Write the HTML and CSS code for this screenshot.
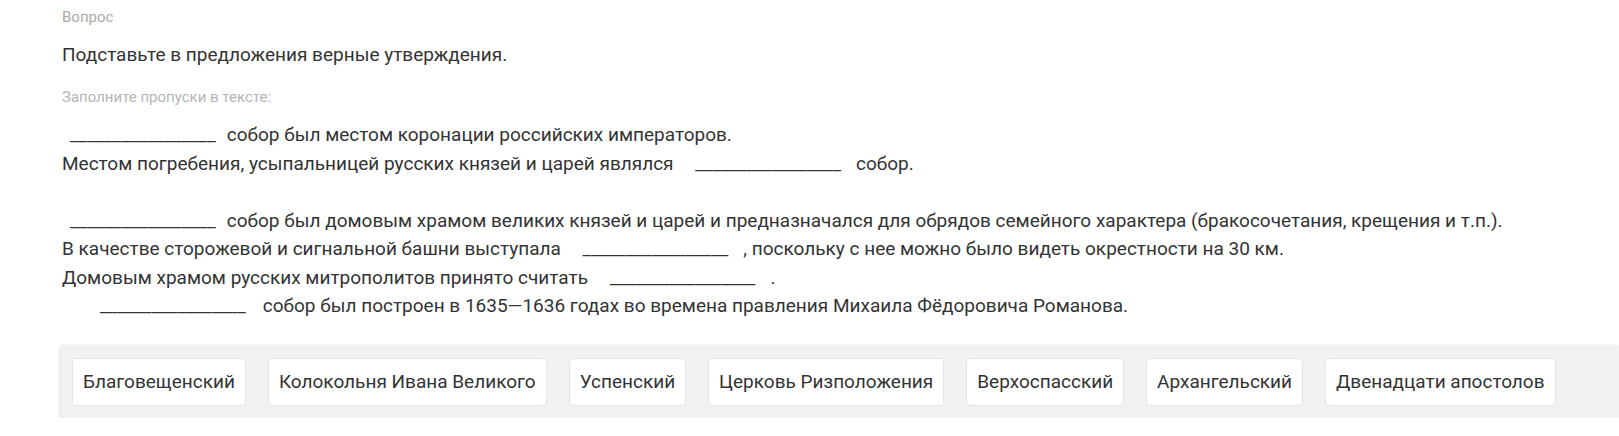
FILE: index.html
```html
<!DOCTYPE html>
<html lang="ru">

<head>
    <meta charset="UTF-8">
    <title>Вопрос</title>
    <link rel="stylesheet" href="styles.css">
</head>

<body>
    <section class="question">
        <div class="label">Вопрос</div>
        <div class="title">Подставьте в предложения верные утверждения.</div>
        <div class="hint">Заполните пропуски в тексте:</div>

        <!-- текст с пропусками -->
        <div class="text">
            <div class="line"><span class="gap first">_________________</span> собор был местом коронации российских императоров.</div>
            <div class="line">Местом погребения, усыпальницей русских князей и царей являлся <span class="gap">_________________</span> собор.</div>
            <div class="line empty"></div>
            <div class="line"><span class="gap first">_________________</span> собор был домовым храмом великих князей и царей и предназначался для обрядов семейного характера (бракосочетания, крещения и т.п.).</div>
            <div class="line">В качестве сторожевой и сигнальной башни выступала <span class="gap">_________________</span> , поскольку с нее можно было видеть окрестности на 30 км.</div>
            <div class="line">Домовым храмом русских митрополитов принято считать <span class="gap">_________________</span> .</div>
            <div class="line"><span class="gap indent">_________________</span> собор был построен в 1635—1636 годах во времена правления Михаила Фёдоровича Романова.</div>
        </div>

        <!-- варианты ответов -->
        <div class="answers">
            <span class="answer">Благовещенский</span>
            <span class="answer">Колокольня Ивана Великого</span>
            <span class="answer">Успенский</span>
            <span class="answer">Церковь Ризположения</span>
            <span class="answer">Верхоспасский</span>
            <span class="answer">Архангельский</span>
            <span class="answer">Двенадцати апостолов</span>
        </div>
    </section>
</body>

</html>
```

FILE: styles.css
```css
body {
    margin: 0;
    font-family: Roboto, "Liberation Sans", sans-serif;
    color: #333;
    background: #fff;
}

.question {
    padding: 7px 0 0 62px;
}

.question .label {
    font-size: 15px;
    color: #aaa;
    line-height: 20px;
}

.question .title {
    margin-top: 16px;
    font-size: 19px;
    line-height: 24px;
    color: #333;
}

.question .hint {
    margin-top: 20px;
    font-size: 15px;
    color: #b5b5b5;
    line-height: 20px;
}

.question .text {
    margin-top: 14px;
    font-size: 19px;
}

.question .line {
    line-height: 28.5px;
    height: 28.5px;
    white-space: nowrap;
}

/* пропуск */
.question .gap {
    display: inline-block;
    vertical-align: top;
    width: 146px;
    margin: 0 10px 0 17px;
    color: #333;
}

.question .gap.first {
    margin-left: 8px;
    margin-right: 6px;
}

.question .gap.indent {
    margin-left: 38px;
    margin-right: 12px;
}

.answers {
    margin-top: 25px;
    margin-left: -1px;
    display: flex;
    gap: 22px;
    padding: 12px 11px;
    background: #f2f2f2;
    box-shadow: 0 1px 4px rgba(0, 0, 0, 0.22);
}

.answer {
    display: block;
    height: 46px;
    line-height: 46px;
    padding: 0 10px;
    background: #fff;
    border: 1px solid #e4e4e4;
    border-radius: 4px;
    font-size: 19px;
    color: #333;
}
```
